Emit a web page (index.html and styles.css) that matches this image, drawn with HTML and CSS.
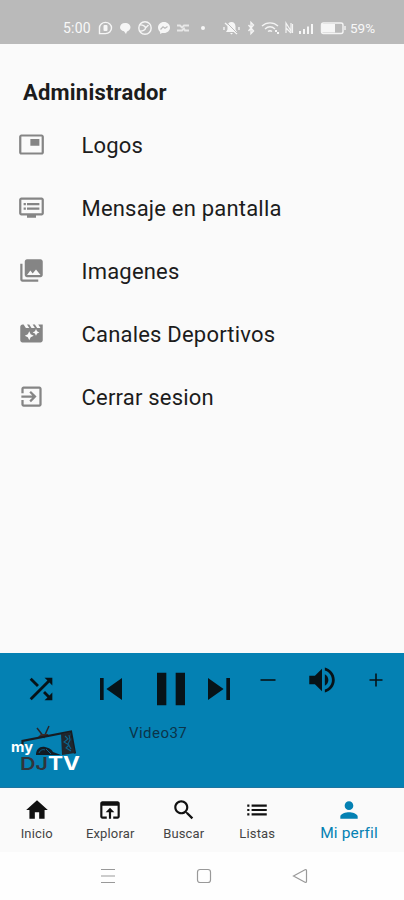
FILE: index.html
```html
<!DOCTYPE html>
<html lang="es">
<head>
    <meta charset="UTF-8">
    <meta name="viewport" content="width=device-width, initial-scale=1.0">
    <title>My DJ TV</title>
    <link rel="stylesheet" href="styles.css">
</head>
<body>
<div id="app">
    <header class="status">
        <span class="time">5:00</span>
        <svg class="left-icons" width="108" height="16" viewBox="0 0 108 16">
            <g fill="none" stroke="#f6f6f6" stroke-width="1.4">
                <path d="M2.500 13.500V8a6 5.600 0 1 1 6 5.600z"/>
                <circle cx="48" cy="8" r="6.200"/>
                <path d="M42.500 5c3-.5 6 1 6 3s-3 3.500-6 3M48.500 8l3-3"/>
                <path d="M80 5.500h3l2 2 2-2h5M80 10.500h5l2-2 1 2h4" stroke-width="1.800" opacity=".75"/>
            </g>
            <g fill="#f6f6f6">
                <rect x="6.500" y="5" width="4" height="6" rx="1"/>
                <path d="M28 3c3.500 0 5.500 2 5.500 4.300S31.500 11 30 11.500L29 14l-2-2.700c-2.500-.4-4-2-4-4C23 5 25 3 28 3z"/>
                <path d="M67 2c-3.600 0-6 2.500-6 5.600 0 1.800.8 3.300 2.100 4.300V14l2-1.100c.6.2 1.200.2 1.900.2 3.500 0 6-2.400 6-5.500S70.500 2 67 2z"/>
                <circle cx="106" cy="8" r="2"/>
            </g>
            <path d="M63.500 9.500l2.500-2.700 2 1.500 2.500-1.700" fill="none" stroke="#bababa" stroke-width="1.200"/>
        </svg>
        <svg class="right-icons" width="124" height="16" viewBox="0 0 124 16">
            <g fill="none" stroke="#f4f4f4" stroke-width="1.400">
                <path d="M2 3l12 11M1 7v3M16 7v3"/>
                <path d="M25.500 5l5 6-2.500 2.500v-11L30.500 5l-5 6"/>
                <path d="M39 6c4.500-4.200 11.500-4.200 16 0M42 9c3-2.600 7-2.600 10 0M45 11.500c1.200-1 2.800-1 4 0"/>
                <path d="M63 13V3l5 8V3M69.500 4v9M63 8l5 5" stroke-width="1.200"/>
                <rect x="98.500" y="3" width="21.500" height="10.500" rx="2"/>
                <path d="M122 6v4"/>
            </g>
            <g fill="#f6f6f6">
                <path d="M8.500 2C6 2 4.500 4 4.500 6.500v3L3 12h11l-1.500-2.500v-3C12.500 4 11 2 8.500 2zM7 13h3l-1.500 1.500z"/>
                <path d="M52 10h2v2h-2zM54 12h2v2h-2z"/>
                <path d="M76 11h2v3h-2zM80 9h2v5h-2zM84 6.500h2V14h-2zM88 4h2v10h-2z"/>
                <path d="M99 4h13v8.500H99z"/>
            </g>
            <path d="M4 3l10 10" stroke="#bababa" stroke-width="1"/>
        </svg>
        <span class="battery">59%</span>
    </header>

    <main class="content">
        <h1>Administrador</h1>
        <ul class="menu">
            <li>
                <svg viewBox="0 0 24 24"><path d="M19 7h-8v6h8V7zm2-4H3c-1.100 0-2 .9-2 2v14c0 1.100.9 1.980 2 1.980h18c1.100 0 2-.88 2-1.980V5c0-1.100-.9-2-2-2zm0 16.010H3V4.980h18v14.030z"/></svg>
                <span>Logos</span>
            </li>
            <li>
                <svg viewBox="0 0 24 24"><path d="M21 3H3c-1.100 0-2 .9-2 2v12c0 1.100.9 2 2 2h5v2h8v-2h5c1.100 0 1.990-.9 1.990-2L23 5c0-1.100-.9-2-2-2zm0 14H3V5h18v12zm-2-9H8v2h11V8zm0 4H8v2h11v-2zM7 8H5v2h2V8zm0 4H5v2h2v-2z"/></svg>
                <span>Mensaje en pantalla</span>
            </li>
            <li>
                <svg viewBox="0 0 24 24"><path d="M22 16V4c0-1.100-.9-2-2-2H8c-1.100 0-2 .9-2 2v12c0 1.100.9 2 2 2h12c1.100 0 2-.9 2-2zm-11-4l2.030 2.710L16 11l4 5H8l3-4zM2 6v14c0 1.100.9 2 2 2h14v-2H4V6H2z"/></svg>
                <span>Imagenes</span>
            </li>
            <li>
                <svg viewBox="0 0 24 24"><path d="M18 4l2 3h-3l-2-3h-2l2 3h-3l-2-3H8l2 3H7L5 4H4c-1.100 0-1.990.9-1.990 2L2 18c0 1.100.9 2 2 2h16c1.100 0 2-.9 2-2V4h-4zm-6.750 11.250L10 18l-1.250-2.750L6 14l2.750-1.250L10 10l1.250 2.750L14 14l-2.750 1.250zm5.690-3.310L16 14l-.94-2.060L13 11l2.060-.94L16 8l.94 2.060L19 11l-2.060.94z"/></svg>
                <span>Canales Deportivos</span>
            </li>
            <li>
                <svg viewBox="0 0 24 24"><path d="M10.090 15.590L11.500 17l5-5-5-5-1.410 1.410L12.670 11H3v2h9.670l-2.580 2.590zM19 3H5c-1.110 0-2 .9-2 2v4h2V5h14v14H5v-4H3v4c0 1.100.89 2 2 2h14c1.100 0 2-.9 2-2V5c0-1.100-.9-2-2-2z"/></svg>
                <span>Cerrar sesion</span>
            </li>
        </ul>
    </main>

    <section class="player">
        <div class="controls">
            <svg width="34" height="34" viewBox="0 0 24 24"><path d="M10.590 9.170L5.410 4 4 5.410l5.170 5.170 1.420-1.410zM14.500 4l2.040 2.040L4 18.590 5.410 20 17.960 7.460 20 9.500V4h-5.500zm.33 9.410l-1.410 1.410 3.130 3.130L14.500 20H20v-5.500l-2.040 2.040-3.130-3.130z"/></svg>
            <svg width="44" height="44" viewBox="0 0 24 24"><path d="M6 6h2v12H6zm3.500 6l8.500 6V6z"/></svg>
            <svg width="56" height="56" viewBox="0 0 24 24"><path d="M6 19h4V5H6v14zm8-14v14h4V5h-4z"/></svg>
            <svg width="44" height="44" viewBox="0 0 24 24"><path d="M6 18l8.500-6L6 6v12zM16 6v12h2V6h-2z"/></svg>
            <svg class="volume" width="16" height="16" viewBox="0 0 16 16"><path d="M.5 7.200h15v1.600H.5z"/></svg>
            <svg class="volume" width="34" height="34" viewBox="0 0 24 24"><path d="M3 9v6h4l5 5V4L7 9H3zm13.500 3c0-1.770-1.020-3.290-2.500-4.030v8.050c1.480-.73 2.500-2.250 2.500-4.020zM14 3.230v2.060c2.890.86 5 3.540 5 6.710s-2.110 5.850-5 6.710v2.060c4.010-.91 7-4.490 7-8.770s-2.990-7.860-7-8.770z"/></svg>
            <svg class="volume" width="16" height="16" viewBox="0 0 16 16"><path d="M1.500 7.200h5.700V1.500h1.600v5.700h5.700v1.600H8.800v5.700H7.200V8.800H1.500z"/></svg>
        </div>
        <div class="playing">
            <svg class="logo" width="72" height="50" viewBox="0 0 72 50">
                <path d="M26 3l7 9 5-11" fill="none" stroke="#26262b" stroke-width="1.500"/>
                <path d="M27 12l3-3h7l1 3z" fill="#392b2b"/>
                <path d="M11.500 21v-5L60 6.500l4 22" fill="none" stroke="#171c22" stroke-width="2.200"/>
                <path d="M50 9l9-2 5 21-13 2z" fill="#20272e"/>
                <path d="M54 11l3 3-4 3 5 3-3 3 5 3M58 10l1 5-2 4 3 5" fill="none" stroke="#0b6690" stroke-width="1.100"/>
                <path d="M25 30c0-6 4-9 9-8s7 3 8 5l8 3z" fill="#121a22"/>
                <path d="M28 28c1-3 4-4 6-3M35 24l5 5" fill="none" stroke="#09618c" stroke-width="1"/>
                <text class="logo-my" x="0" y="27" textLength="22" lengthAdjust="spacingAndGlyphs">my</text>
                <text class="logo-dj" x="9" y="45" textLength="28" lengthAdjust="spacingAndGlyphs">DJ</text>
                <text class="logo-tv" x="37" y="45" textLength="32" lengthAdjust="spacingAndGlyphs">TV</text>
            </svg>
            <span class="track">Video37</span>
        </div>
    </section>

    <nav class="tabs">
        <a>
            <svg viewBox="0 0 24 24"><path d="M10 20v-6h4v6h5v-8h3L12 3 2 12h3v8z"/></svg>
            <span>Inicio</span>
        </a>
        <a>
            <svg viewBox="0 0 24 24"><path d="M19 4H5c-1.110 0-2 .9-2 2v12c0 1.100.89 2 2 2h4v-2H5V8h14v10h-4v2h4c1.100 0 2-.9 2-2V6c0-1.100-.89-2-2-2zm-7 6l-4 4h3v6h2v-6h3l-4-4z"/></svg>
            <span>Explorar</span>
        </a>
        <a>
            <svg viewBox="0 0 24 24"><path d="M15.500 14h-.79l-.28-.27C15.410 12.590 16 11.110 16 9.500 16 5.910 13.090 3 9.500 3S3 5.910 3 9.500 5.910 16 9.500 16c1.610 0 3.090-.59 4.230-1.570l.27.28v.79l5 4.990L20.490 19l-4.990-5zm-6 0C7.010 14 5 11.990 5 9.500S7.010 5 9.500 5 14 7.010 14 9.500 11.990 14 9.500 14z"/></svg>
            <span>Buscar</span>
        </a>
        <a>
            <svg viewBox="0 0 24 24"><path d="M3 13h2v-2H3v2zm0 4h2v-2H3v2zm0-8h2V7H3v2zm4 4h14v-2H7v2zm0 4h14v-2H7v2zM7 7v2h14V7H7z"/></svg>
            <span>Listas</span>
        </a>
        <a class="active">
            <svg viewBox="0 0 24 24"><path d="M12 12c2.210 0 4-1.790 4-4s-1.790-4-4-4-4 1.790-4 4 1.790 4 4 4zm0 2c-2.670 0-8 1.340-8 4v2h16v-2c0-2.660-5.330-4-8-4z"/></svg>
            <span>Mi perfil</span>
        </a>
    </nav>

    <footer class="system">
        <svg viewBox="0 0 16 16"><path d="M1 1.500h14M1 8h14M1 14.500h14"/></svg>
        <svg viewBox="0 0 16 16"><rect x="1.500" y="1.500" width="13" height="13" rx="2.500"/></svg>
        <svg viewBox="0 0 16 16"><path d="M1.500 8L13 1.800q1.500-.5 1.500 1v10.400q0 1.500-1.500 1z"/></svg>
    </footer>
</div>
</body>
</html>
```
FILE: styles.css
```css
body {
    margin: 0;
    font-family: Roboto, "Liberation Sans", sans-serif;
    color: #1c1c1c;
    background: #fafafa;
}
ul {
    margin: 0;
    padding: 0;
    list-style: none;
}
svg {
    display: block;
    flex: none;
}
#app {
    display: flex;
    flex-direction: column;
    height: 900px;
    overflow: hidden;
}
.status {
    display: flex;
    align-items: center;
    box-sizing: border-box;
    height: 44px;
    padding: 11px 0 0 63px;
    background: #bababa;
    color: #f8f8f8;
    font-size: 14px;
}
.time {
    width: 34px;
    letter-spacing: .2px;
}
.right-icons {
    margin-left: 18px;
}
.battery {
    margin-left: 3px;
    font-size: 13.5px;
}
.content {
    flex: 1;
}
h1 {
    margin: 34px 0 5px 23px;
    font-size: 22px;
    line-height: 30px;
    font-weight: 700;
    letter-spacing: .2px;
}
.menu li {
    display: flex;
    align-items: center;
    height: 63px;
    padding-left: 18px;
    font-size: 22px;
    letter-spacing: .2px;
}
.menu svg {
    width: 27px;
    height: 27px;
    margin-right: 36.5px;
    fill: #858585;
}
.menu span {
    padding-top: 1px;
}
.player {
    box-sizing: border-box;
    height: 135px;
    background: #0481b3;
    border-bottom: 1px solid #1d75a0;
    fill: #071318;
}
.controls {
    display: grid;
    grid-template-columns: 81px 60px 60px 36px 62px 46px 61px;
    justify-items: center;
    align-items: center;
    height: 72px;
}
.controls .volume {
    margin-bottom: 18px;
}
.playing {
    display: flex;
    align-items: flex-start;
    padding-left: 11px;
}
.track {
    margin-left: 46px;
    font-size: 15px;
    line-height: 17px;
    letter-spacing: .45px;
    color: #0b344a;
}
.logo {
    font-family: Inter, sans-serif;
    font-weight: 700;
}
.logo-my {
    font-size: 14px;
    fill: #fff;
}
.logo-dj {
    font-size: 17.5px;
    font-weight: 600;
    fill: #30343a;
}
.logo-tv {
    font-size: 19px;
    fill: #fff;
}
.tabs {
    display: grid;
    grid-template-columns: repeat(4, 73.5px) 110px;
    height: 64px;
    background: #fafafa;
}
.tabs a {
    display: flex;
    flex-direction: column;
    align-items: center;
    padding-top: 9px;
    font-size: 13px;
    line-height: 20px;
    letter-spacing: .15px;
    color: #444;
}
.tabs svg {
    width: 26px;
    height: 26px;
    margin-bottom: 1px;
    fill: #111;
}
.tabs .active {
    font-size: 15.5px;
    line-height: 18px;
    color: #0481b3;
}
.tabs .active svg {
    fill: #0481b3;
}
.system {
    display: flex;
    align-items: center;
    justify-content: center;
    gap: 80px;
    height: 48px;
    padding-left: 4px;
    background: #fefefe;
}
.system svg {
    width: 16px;
    height: 16px;
    fill: none;
    stroke: #999;
    stroke-width: 1.2;
}
```
